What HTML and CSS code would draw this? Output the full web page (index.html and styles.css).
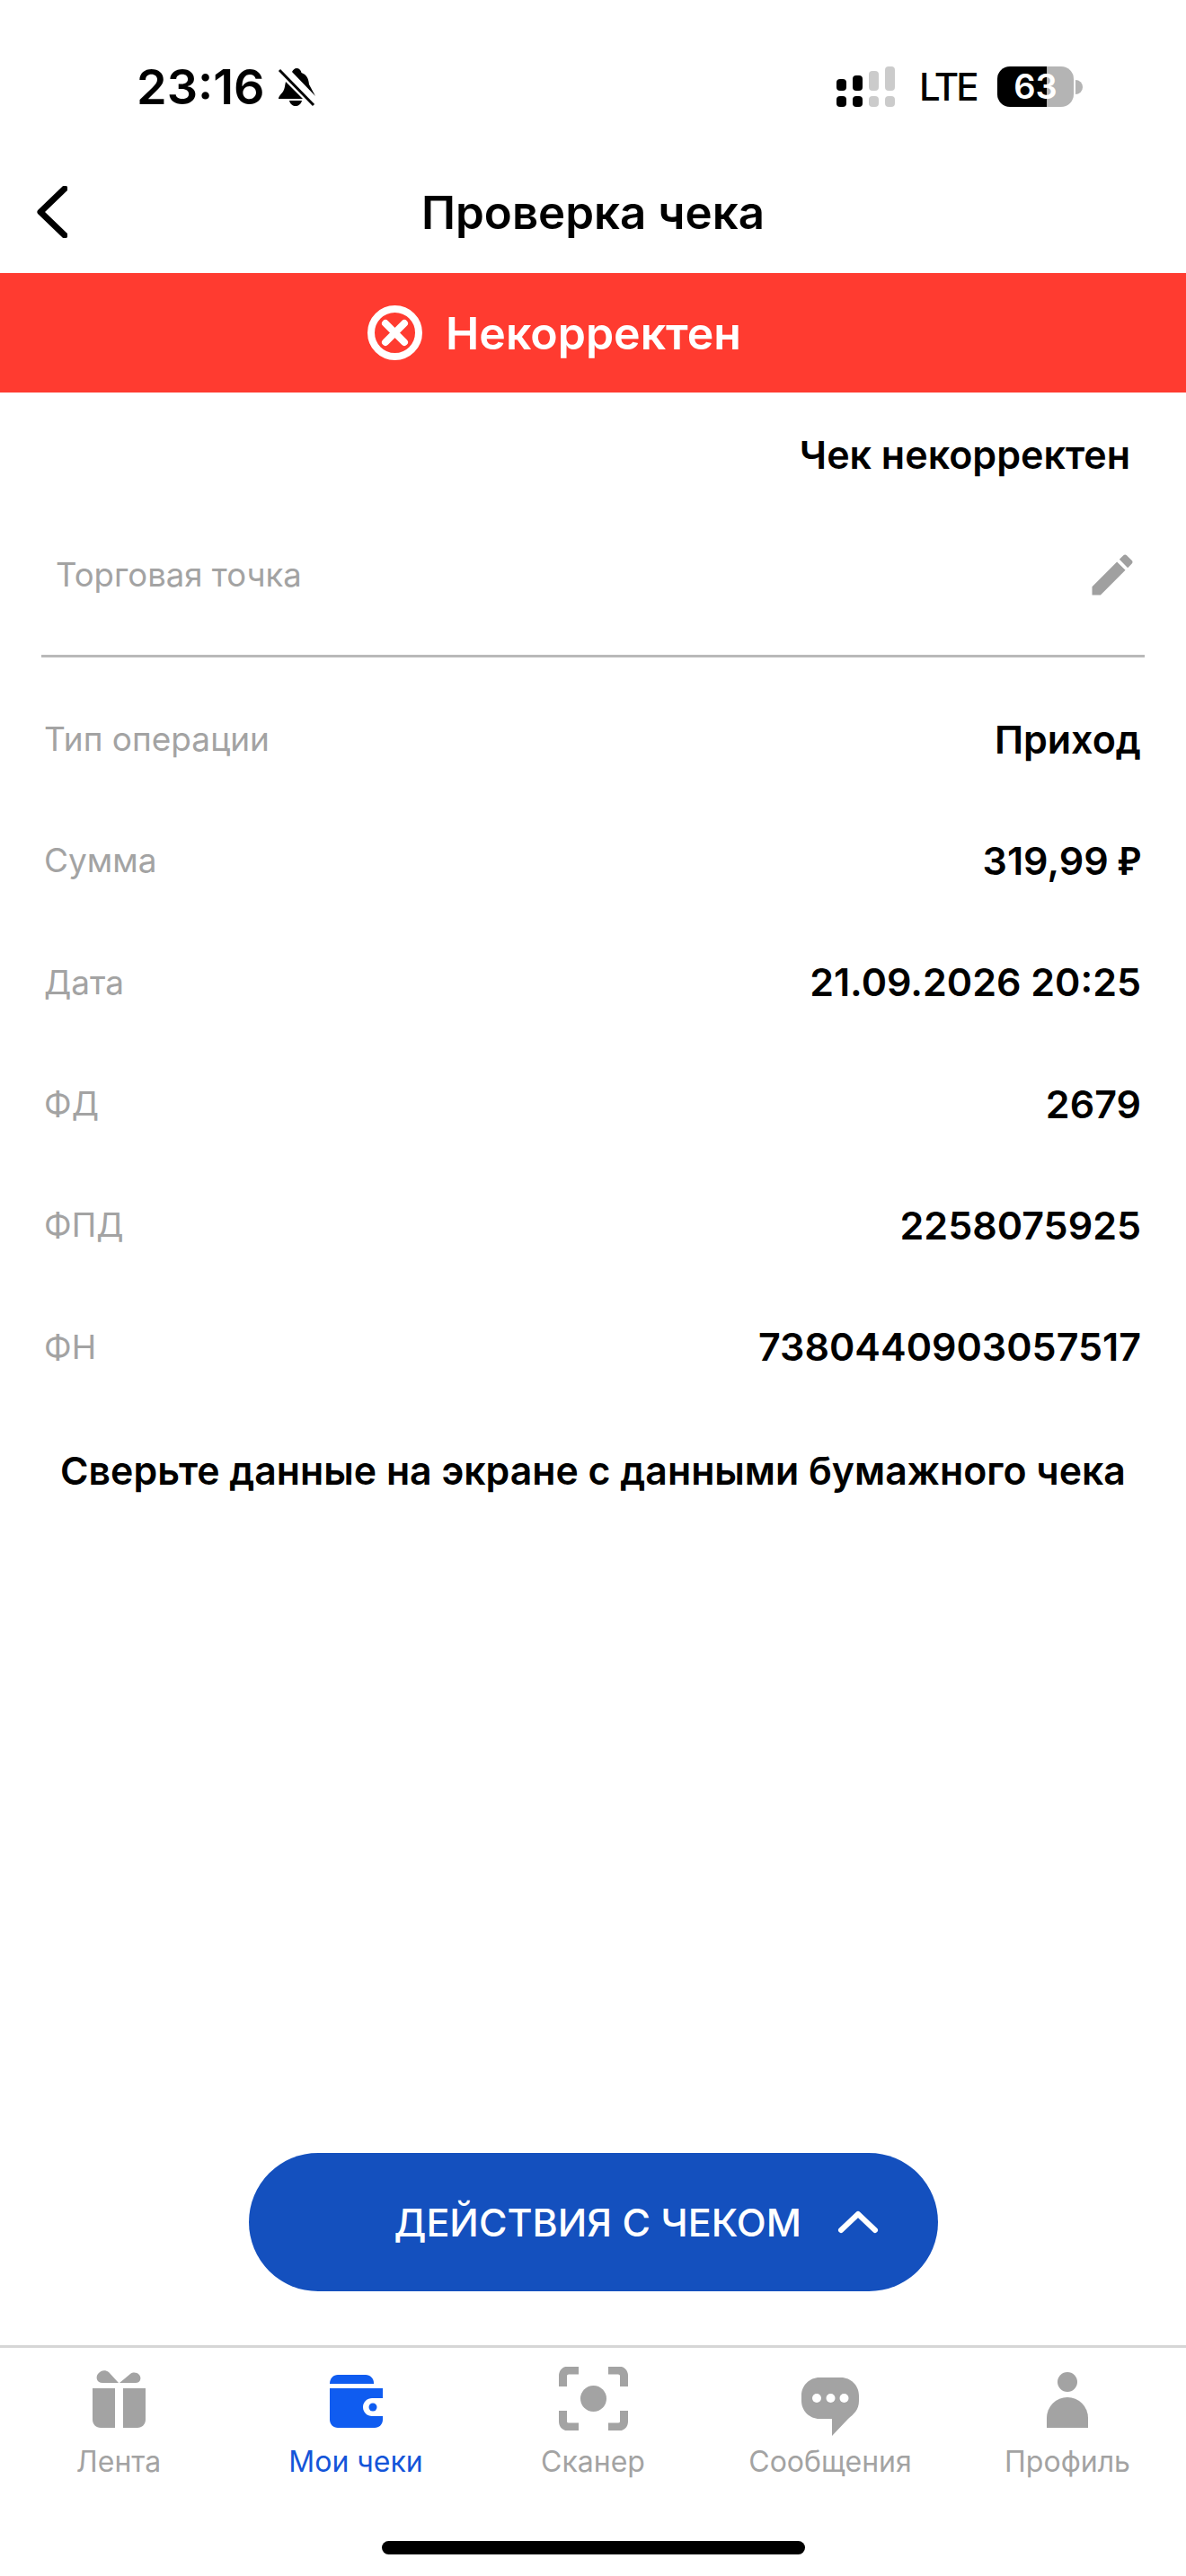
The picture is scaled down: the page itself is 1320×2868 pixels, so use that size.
FILE: index.html
```html
<!DOCTYPE html>
<html lang="ru">
  <head>
    <meta charset="UTF-8" />
    <meta name="viewport" content="width=device-width, initial-scale=1.0" />
    <title>Проверка чека</title>
    <link rel="stylesheet" href="styles.css">
  </head>
  <body>
    <div class="screen">
      <div class="status">
        <div class="status-left">
          <span class="time">23:16</span>
          <svg class="bell" width="42" height="44" viewBox="0 0 42 44">
            <path d="M21 1c3 0 5 2 5.500 5 6 2 8 7 8.500 13l7 13-26-27c1-2 3-4 5-4zM9 16l19 19H1c0-3 3-5 5-8 2-3 2-7 3-11zM13 37h14c-1 4-4 6-7 6s-6-2-7-6z" />
            <path class="bell-slash" d="M2 3l38 39" />
          </svg>
        </div>
        <div class="status-right">
          <svg class="signal" width="65" height="45" viewBox="0 0 65 45">
            <rect x="0" y="14" width="11" height="13" rx="4" />
            <rect x="0" y="33" width="11" height="12" rx="4" />
            <rect x="18" y="10" width="11" height="17" rx="4" />
            <rect x="18" y="33" width="11" height="12" rx="4" />
            <rect class="off" x="36" y="5" width="11" height="22" rx="4" />
            <rect class="off" x="36" y="33" width="11" height="12" rx="4" />
            <rect class="off" x="54" y="0" width="11" height="27" rx="4" />
            <rect class="off" x="54" y="33" width="11" height="12" rx="4" />
          </svg>
          <span class="lte">LTE</span>
          <div class="battery-wrap">
            <div class="battery">63</div>
            <div class="battery-nub"></div>
          </div>
        </div>
      </div>

      <div class="nav">
        <svg class="back" width="34" height="58" viewBox="0 0 34 58">
          <path d="M31 3L4 29l27 26" />
        </svg>
        <div class="nav-title">Проверка чека</div>
      </div>

      <div class="banner">
        <svg width="61" height="61" viewBox="0 0 61 61">
          <circle cx="30.500" cy="30.500" r="26.500" />
          <path d="M20 20l21 21M41 20L20 41" />
        </svg>
        <span>Некорректен</span>
      </div>

      <div class="content">
        <div class="verdict">Чек некорректен</div>
        <div class="merchant">
          <span class="merchant-name">Торговая точка</span>
          <svg width="60" height="60" viewBox="0 0 24 24">
            <path d="M3 17.250V21h3.750L17.810 9.940l-3.750-3.750L3 17.250zM20.710 7.040c.39-.39.39-1.020 0-1.410l-2.340-2.340c-.39-.39-1.020-.39-1.410 0l-1.830 1.830 3.750 3.750 1.830-1.830z" />
          </svg>
        </div>
        <div class="rows">
          <div class="row"><span class="label">Тип операции</span><span class="value">Приход</span></div>
          <div class="row"><span class="label">Сумма</span><span class="value">319,99 <span class="rub">₽</span></span></div>
          <div class="row"><span class="label">Дата</span><span class="value">21.09.2026 20:25</span></div>
          <div class="row"><span class="label">ФД</span><span class="value">2679</span></div>
          <div class="row"><span class="label">ФПД</span><span class="value">2258075925</span></div>
          <div class="row"><span class="label">ФН</span><span class="value">7380440903057517</span></div>
        </div>
        <div class="hint">Сверьте данные на экране с данными бумажного чека</div>
      </div>

      <div class="actions">
        <div class="actions-btn">
          <span>ДЕЙСТВИЯ С ЧЕКОМ</span>
          <svg width="46" height="26" viewBox="0 0 46 26">
            <path d="M4 22L23 4l19 18" />
          </svg>
        </div>
      </div>

      <div class="tabs">
        <div class="tab">
          <div class="tab-icon">
            <svg width="59" height="65" viewBox="0 0 59 65">
              <path d="M29 15H11C5 15 3 9 6 5c3-4 8-5 12-2zM30 15h18c5 0 7-5 4-9-3-3-7-3-10-1z" />
              <path d="M0 21h25v44H9c-5 0-9-4-9-9zM34 21h25v35c0 5-4 9-9 9H34z" />
            </svg>
          </div>
          <span>Лента</span>
        </div>
        <div class="tab active">
          <div class="tab-icon">
            <svg width="59" height="59" viewBox="0 0 59 59">
              <path d="M0 10C0 4 4 0 9 0h31c5 0 9 4 9 9v1z" />
              <path d="M0 15h59v11H47c-5 0-10 4-10 10s5 10 10 10h12v4c0 5-4 9-9 9H9c-5 0-9-4-9-9z" />
              <circle cx="48" cy="36" r="4.500" />
            </svg>
          </div>
          <span>Мои чеки</span>
        </div>
        <div class="tab">
          <div class="tab-icon">
            <svg class="scan" width="77" height="71" viewBox="0 0 77 71">
              <path class="scan-corners" d="M22 4H11c-4 0-6.500 2-6.500 6v12M55 4h11c4 0 6.500 2 6.500 6v12M22 67H11c-4 0-6.500-2-6.500-6V49M55 67h11c4 0 6.500-2 6.500-6V49" />
              <circle cx="38.500" cy="35.500" r="14.500" />
            </svg>
          </div>
          <span>Сканер</span>
        </div>
        <div class="tab">
          <div class="tab-icon">
            <svg class="chat" width="64" height="65" viewBox="0 0 64 65">
              <path d="M20 0h24c11 0 20 9 20 20v6c0 10-6 15-12 20L34 65V46H20C9 46 0 37 0 26v-6C0 9 9 0 20 0z" />
              <circle class="dot" cx="17" cy="23" r="5" />
              <circle class="dot" cx="32.500" cy="23" r="5" />
              <circle class="dot" cx="47.500" cy="23" r="5" />
            </svg>
          </div>
          <span>Сообщения</span>
        </div>
        <div class="tab">
          <div class="tab-icon">
            <svg width="46" height="62" viewBox="0 0 46 62">
              <ellipse cx="23" cy="11" rx="11" ry="11" />
              <path d="M0 62V51a23 23 0 0 1 46 0v11z" />
            </svg>
          </div>
          <span>Профиль</span>
        </div>
      </div>

      <div class="home-bar">
        <div class="home-line"></div>
      </div>
    </div>
  </body>
</html>
```

FILE: styles.css
```css
* {
  box-sizing: border-box;
}
body {
  margin: 0;
  background-color: #fff;
  font-family: Inter, "Noto Sans", sans-serif;
  color: #000;
}
.screen {
  width: 1320px;
  height: 2868px;
  display: flex;
  flex-direction: column;
  overflow: hidden;
}

/* status bar */
.status {
  height: 168px;
  padding: 74px 115px 0 152px;
  display: flex;
  justify-content: space-between;
  align-items: flex-start;
}
.status-left {
  display: flex;
  align-items: center;
  gap: 14px;
  height: 45px;
}
.time {
  font-size: 54px;
  font-weight: 600;
  line-height: 45px;
}
.bell {
  fill: #000;
}
.bell-slash {
  stroke: #000;
  stroke-width: 3;
  fill: none;
}
.status-right {
  display: flex;
  align-items: center;
  height: 45px;
}
.signal {
  fill: #000;
}
.signal .off {
  fill: #cbcbcb;
}
.lte {
  margin-left: 27px;
  width: 87px;
  font-size: 42px;
  font-weight: 500;
  line-height: 45px;
  letter-spacing: -3px;
}
.battery-wrap {
  display: flex;
  align-items: center;
}
.battery {
  width: 85px;
  height: 45px;
  border-radius: 14px;
  background: linear-gradient(to right, #000 55px, #b4b4b4 55px);
  color: #fff;
  font-size: 38px;
  font-weight: 600;
  line-height: 45px;
  text-align: center;
}
.battery-nub {
  width: 8px;
  height: 16px;
  margin-left: 2px;
  border-radius: 0 8px 8px 0;
  background-color: #b4b4b4;
}

/* nav */
.nav {
  height: 136px;
  padding: 0 41px;
  display: grid;
  grid-template-columns: 1fr auto 1fr;
  align-items: center;
}
.back {
  fill: none;
  stroke: #000;
  stroke-width: 7;
  stroke-linecap: round;
  stroke-linejoin: round;
}
.nav-title {
  font-size: 51px;
  font-weight: 600;
}

.banner {
  height: 133px;
  padding-right: 86px;
  background-color: #ff3b30;
  color: #fff;
  display: flex;
  justify-content: center;
  align-items: center;
  gap: 26px;
  font-size: 50px;
  font-weight: 600;
}
.banner svg {
  fill: none;
  stroke: #fff;
  stroke-width: 8;
  stroke-linecap: round;
}

/* content */
.content {
  flex: 1;
}
.verdict {
  padding: 43px 62px 0 0;
  font-size: 43px;
  font-weight: 600;
  line-height: 52px;
  text-align: right;
}
.merchant {
  margin: 64px 46px 0;
  height: 136px;
  padding: 0 6px 45px 16px;
  border-bottom: 3px solid #b9b9b9;
  display: flex;
  justify-content: space-between;
  align-items: center;
}
.merchant svg {
  fill: #a0a0a0;
}
.merchant-name {
  font-size: 36.500px;
  color: #a3a3a3;
}
.rows {
  padding: 23px 50px 0 49px;
}
.row {
  height: 135.300px;
  display: flex;
  justify-content: space-between;
  align-items: center;
}
.label {
  font-size: 37px;
  color: #a3a3a3;
}
.value {
  font-size: 43px;
  font-weight: 600;
}
.rub {
  font-family: "Noto Sans", sans-serif;
}
.hint {
  margin-top: 45px;
  font-size: 42.800px;
  font-weight: 600;
  line-height: 52px;
  text-align: center;
}

/* actions */
.actions {
  display: flex;
  justify-content: center;
  padding-bottom: 60px;
}
.actions-btn {
  width: 767px;
  height: 154px;
  padding-left: 162px;
  border-radius: 77px;
  background-color: #1450be;
  color: #fff;
  display: flex;
  align-items: center;
  gap: 40px;
  font-size: 43px;
  font-weight: 500;
}
.actions-btn svg {
  fill: none;
  stroke: #fff;
  stroke-width: 6;
  stroke-linecap: round;
  stroke-linejoin: round;
}

/* tab bar */
.tabs {
  height: 174px;
  border-top: 3px solid #d6d6d6;
  display: grid;
  grid-template-columns: repeat(5, 1fr);
}
.tab {
  display: flex;
  flex-direction: column;
  align-items: center;
  color: #a3a3a3;
  font-size: 32px;
  line-height: 36px;
}
.tab-icon {
  height: 109px;
  display: flex;
  align-items: flex-end;
  padding-bottom: 20px;
}
.tab-icon svg {
  fill: #a3a3a3;
}
.tab-icon .scan {
  margin-bottom: -3px;
}
.tab-icon .chat {
  margin-bottom: -9px;
}
.tab-icon .dot {
  fill: #fff;
}
.tab-icon .scan-corners {
  fill: none;
  stroke: #a3a3a3;
  stroke-width: 9;
}
.tab.active {
  color: #1455d9;
}
.tab.active .tab-icon svg {
  fill: #0f5cf0;
}
.home-bar {
  height: 83px;
  padding-top: 44px;
  display: flex;
  justify-content: center;
}
.home-line {
  width: 471px;
  height: 15px;
  border-radius: 8px;
  background-color: #000;
}
```
